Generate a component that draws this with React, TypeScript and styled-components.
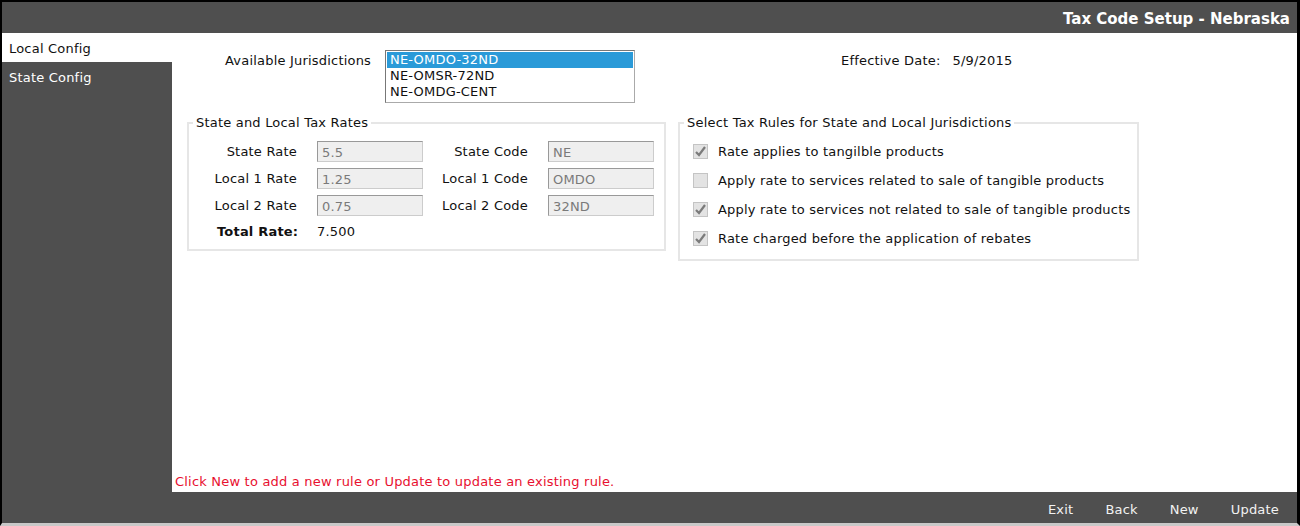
import React from "react";
import styled, { createGlobalStyle } from "styled-components";

const Global = createGlobalStyle`
  html, body { margin: 0; padding: 0; background: #fff; }
  body { font-family: "DejaVu Sans", Verdana, sans-serif; font-size: 13px; letter-spacing: 0.2px; color: #111; }
  * { box-sizing: border-box; }
`;

const Frame = styled.div`
  width: 1300px;
  height: 526px;
  display: flex;
  flex-direction: column;
  border-left: 2px solid #000;
  border-top: 2px solid #000;
  border-right: 3px solid #000;
  border-bottom: 3px solid #c8c8c8;
  background: #4f4f4f;
`;

const Header = styled.div`
  height: 31px;
  display: flex;
  align-items: center;
  justify-content: flex-end;
  padding: 2px 7px 0 0;
  color: #fff;
  font-weight: bold;
  font-size: 15px;
  letter-spacing: 0;
  flex: none;
`;

const Middle = styled.div`
  flex: 1;
  display: flex;
  min-height: 0;
`;

const Sidebar = styled.div`
  width: 170px;
  display: flex;
  flex-direction: column;
  flex: none;
`;

const NavItem = styled.div<{ $active?: boolean }>`
  height: 29px;
  display: flex;
  align-items: center;
  padding: 1px 0 0 7px;
  background: ${(p) => (p.$active ? "#fff" : "transparent")};
  color: ${(p) => (p.$active ? "#111" : "#fff")};
`;

const Content = styled.div`
  flex: 1;
  background: #fff;
  display: flex;
  flex-direction: column;
  padding: 17px 0 3px 15px;
`;

const TopRow = styled.div`
  display: flex;
  align-items: flex-start;
`;

const JurLabel = styled.div`
  margin-top: 3px;
  margin-left: 38px;
  width: 160px;
`;

const ListBox = styled.div`
  width: 250px;
  height: 53px;
  border: 1px solid #aaa;
  border-top-color: #777;
  border-left-color: #777;
  padding: 1px;
  display: flex;
  flex-direction: column;
`;

const Option = styled.div<{ $sel?: boolean }>`
  height: 16px;
  line-height: 16px;
  padding-left: 3px;
  background: ${(p) => (p.$sel ? "#2a9ad8" : "transparent")};
  color: ${(p) => (p.$sel ? "#fff" : "#111")};
`;

const EffDate = styled.div`
  margin-left: 206px;
  margin-top: 3px;
  display: flex;
  gap: 12px;
`;

const Boxes = styled.div`
  display: flex;
  align-items: flex-start;
  gap: 12px;
  margin-top: 13px;
`;

const Fieldset = styled.fieldset<{ $w: number; $h: number }>`
  margin: 0;
  width: ${(p) => p.$w}px;
  height: ${(p) => p.$h}px;
  border: 2px solid #e6e6e6;
  padding: 0;
`;

const Legend = styled.legend`
  margin-left: 4px;
  padding: 0 3px;
  line-height: 14px;
`;

const RatesGrid = styled.div`
  display: grid;
  grid-template-columns: 128px 106px 125px 106px;
  row-gap: 6px;
  align-items: center;
  margin-top: 11px;
`;

const RLabel = styled.div`
  text-align: right;
  padding-right: 20px;
  white-space: nowrap;
`;

const TotalLabel = styled.div`
  font-weight: bold;
  padding-left: 28px;
  white-space: nowrap;
  line-height: 16px;
  margin-top: 2px;
`;

const Input = styled.div`
  width: 106px;
  height: 21px;
  background: #efefef;
  border: 1px solid #ccc;
  border-top-color: #999;
  border-left-color: #999;
  color: #7a7a7a;
  padding: 1px 0 0 4px;
  display: flex;
  align-items: center;
`;

const TotalValue = styled.div`
  line-height: 16px;
  margin-top: 2px;
`;

const Rules = styled.div`
  display: flex;
  flex-direction: column;
  gap: 13px;
  margin-top: 13px;
  margin-left: 13px;
`;

const Rule = styled.div`
  display: flex;
  align-items: center;
  gap: 10px;
  height: 16px;
`;

const Check = styled.span`
  width: 15px;
  height: 15px;
  background: #e3e3e3;
  border: 1px solid #c4c4c4;
  display: inline-flex;
  align-items: center;
  justify-content: center;
`;

const Spacer = styled.div`
  flex: 1;
`;

const Message = styled.div`
  color: #e8102f;
  margin-left: -12px;
`;

const Footer = styled.div`
  height: 31px;
  flex: none;
  display: flex;
  align-items: center;
  justify-content: flex-end;
  gap: 32px;
  padding: 3px 18px 0 0;
`;

const FBtn = styled.div`
  color: #f2f2f2;
`;

const CheckBox = ({ on }: { on: boolean }) => (
  <Check>
    {on && (
      <svg width="13" height="13" viewBox="0 0 13 13">
        <path d="M2 7 L5 10 L11 2" fill="none" stroke="#7b7b7b" strokeWidth="2.2" />
      </svg>
    )}
  </Check>
);

export default function App() {
  const rules: [boolean, string][] = [
    [true, "Rate applies to tangilble products"],
    [false, "Apply rate to services related to sale of tangible products"],
    [true, "Apply rate to services not related to sale of tangible products"],
    [true, "Rate charged before the application of rebates"],
  ];
  return (
    <>
      <Global />
      <Frame>
        <Header>Tax Code Setup - Nebraska</Header>
        <Middle>
          <Sidebar>
            <NavItem $active>Local Config</NavItem>
            <NavItem>State Config</NavItem>
          </Sidebar>
          <Content>
            <TopRow>
              <JurLabel>Available Jurisdictions</JurLabel>
              <ListBox>
                <Option $sel>NE-OMDO-32ND</Option>
                <Option>NE-OMSR-72ND</Option>
                <Option>NE-OMDG-CENT</Option>
              </ListBox>
              <EffDate>
                <span>Effective Date:</span>
                <span>5/9/2015</span>
              </EffDate>
            </TopRow>
            <Boxes>
              <Fieldset $w={479} $h={135}>
                <Legend>State and Local Tax Rates</Legend>
                <RatesGrid>
                  <RLabel>State Rate</RLabel>
                  <Input>5.5</Input>
                  <RLabel>State Code</RLabel>
                  <Input>NE</Input>
                  <RLabel>Local 1 Rate</RLabel>
                  <Input>1.25</Input>
                  <RLabel>Local 1 Code</RLabel>
                  <Input>OMDO</Input>
                  <RLabel>Local 2 Rate</RLabel>
                  <Input>0.75</Input>
                  <RLabel>Local 2 Code</RLabel>
                  <Input>32ND</Input>
                  <TotalLabel>Total Rate:</TotalLabel>
                  <TotalValue>7.500</TotalValue>
                </RatesGrid>
              </Fieldset>
              <Fieldset $w={461} $h={145}>
                <Legend>Select Tax Rules for State and Local Jurisdictions</Legend>
                <Rules>
                  {rules.map(([on, t]) => (
                    <Rule key={t}>
                      <CheckBox on={on} />
                      <span>{t}</span>
                    </Rule>
                  ))}
                </Rules>
              </Fieldset>
            </Boxes>
            <Spacer />
            <Message>Click New to add a new rule or Update to update an existing rule.</Message>
          </Content>
        </Middle>
        <Footer>
          <FBtn>Exit</FBtn>
          <FBtn>Back</FBtn>
          <FBtn>New</FBtn>
          <FBtn>Update</FBtn>
        </Footer>
      </Frame>
    </>
  );
}
